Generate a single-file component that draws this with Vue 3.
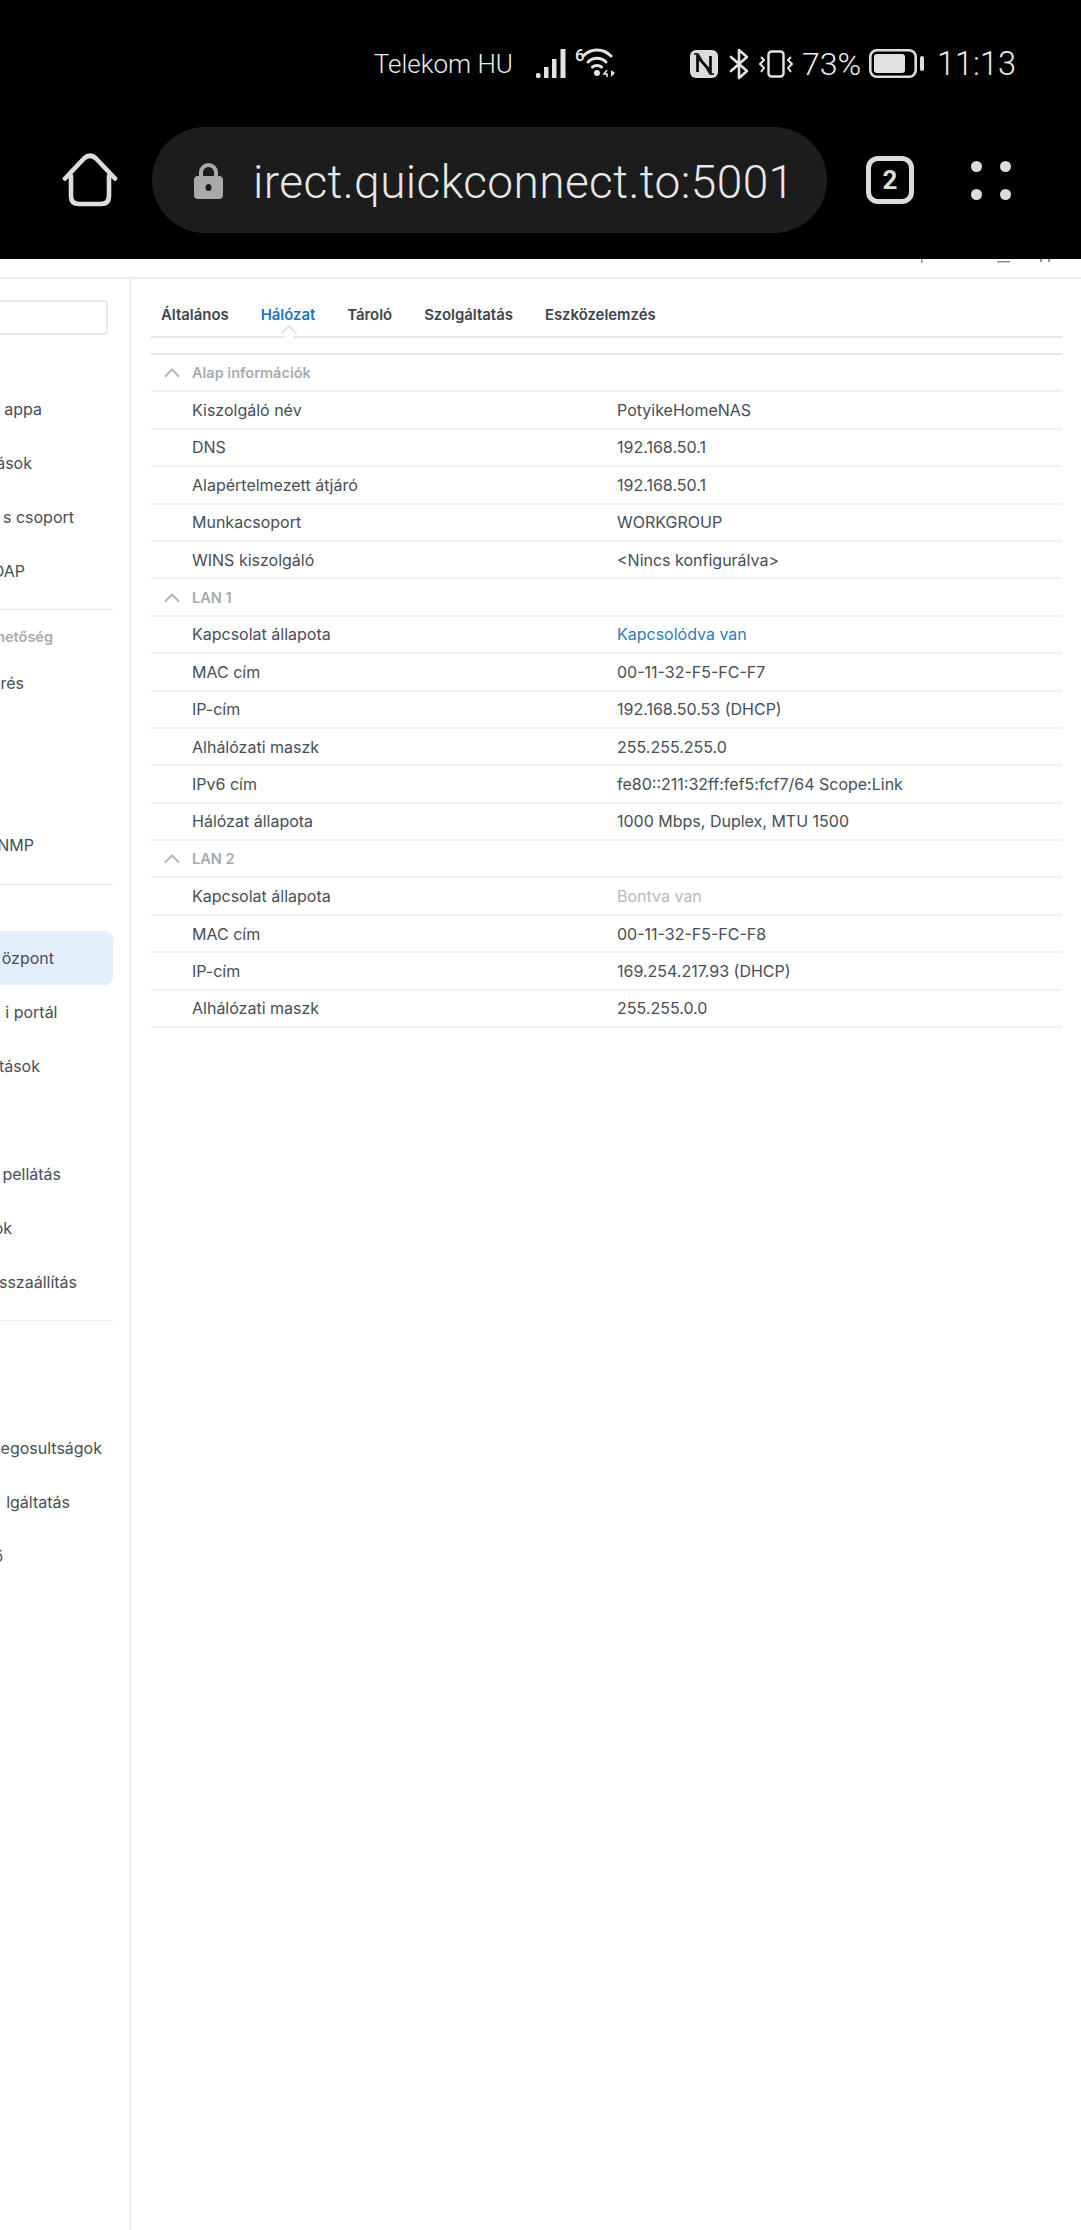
<script setup>
const sideTop = [
  { text: 'appa', end: 42 },
  { text: 'ások', end: 32 },
  { text: 's csoport', end: 74 },
  { text: 'DAP', end: 25 },
]
const sideConn = [
  { text: 'rés', end: 24 },
  { text: '', end: 0 },
  { text: '', end: 0 },
  { text: 'NMP', end: 34 },
]
const sideSys = [
  { text: 'özpont', end: 54, active: true },
  { text: 'i portál', end: 57.5 },
  { text: 'tások', end: 40 },
  { text: '', end: 0 },
  { text: 'pellátás', end: 61 },
  { text: 'ok', end: 12 },
  { text: 'sszaállítás', end: 77 },
]
const sideSvc = [
  { text: '', end: 0 },
  { text: 'egosultságok', end: 102 },
  { text: 'lgáltatás', end: 70 },
  { text: 'ő', end: 3 },
]
const tabs = ['Általános', 'Hálózat', 'Tároló', 'Szolgáltatás', 'Eszközelemzés']
const rows = [
  { head: 'Alap információk' },
  { label: 'Kiszolgáló név', value: 'PotyikeHomeNAS' },
  { label: 'DNS', value: '192.168.50.1' },
  { label: 'Alapértelmezett átjáró', value: '192.168.50.1' },
  { label: 'Munkacsoport', value: 'WORKGROUP' },
  { label: 'WINS kiszolgáló', value: '<Nincs konfigurálva>' },
  { head: 'LAN 1' },
  { label: 'Kapcsolat állapota', value: 'Kapcsolódva van', tone: 'ok' },
  { label: 'MAC cím', value: '00-11-32-F5-FC-F7' },
  { label: 'IP-cím', value: '192.168.50.53 (DHCP)' },
  { label: 'Alhálózati maszk', value: '255.255.255.0' },
  { label: 'IPv6 cím', value: 'fe80::211:32ff:fef5:fcf7/64 Scope:Link' },
  { label: 'Hálózat állapota', value: '1000 Mbps, Duplex, MTU 1500' },
  { head: 'LAN 2' },
  { label: 'Kapcsolat állapota', value: 'Bontva van', tone: 'off' },
  { label: 'MAC cím', value: '00-11-32-F5-FC-F8' },
  { label: 'IP-cím', value: '169.254.217.93 (DHCP)' },
  { label: 'Alhálózati maszk', value: '255.255.0.0' },
]
</script>

<template>
  <div class="screen">
    <header class="phone">
      <div class="status">
        <span class="carrier">Telekom HU</span>
        <svg class="signal" width="30" height="29" viewBox="0 0 30 29" fill="#e4e4e4">
          <rect x="0" y="24" width="4.5" height="5" rx="1.5" />
          <rect x="8" y="18" width="4.5" height="11" />
          <rect x="16" y="10" width="4.5" height="19" />
          <rect x="24.5" y="0" width="5" height="29" />
        </svg>
        <span class="six">6</span>
        <svg class="wifi" width="36" height="30" viewBox="0 0 36 30" fill="none" stroke="#e4e4e4" stroke-width="3" stroke-linecap="round">
          <path d="M2 9 C 10 1, 22 1, 30 9" />
          <path d="M7 15 C 12 10, 20 10, 25 15" />
          <path d="M11.5 20 C 14 18, 18 18, 20.5 20" />
          <circle cx="16" cy="26" r="3" fill="#e4e4e4" stroke="none" />
          <path d="M26 23 L23 27 H26 V30" stroke-width="1.6" stroke-linecap="butt" />
          <path d="M30 23 V30 L34 26 Z" stroke="none" fill="#e4e4e4" />
        </svg>
        <svg class="nfc" width="28" height="28" viewBox="0 0 28 28">
          <rect width="28" height="28" rx="6" fill="#dcdcdc" />
          <path d="M4 4 H8 L20 24 H24" fill="none" stroke="#000" stroke-width="1.4" />
          <path d="M7.5 22 V7 L20.5 21 V6" fill="none" stroke="#000" stroke-width="2.6" />
        </svg>
        <svg class="bt" width="20" height="32" viewBox="0 0 20 32" fill="none" stroke="#e4e4e4" stroke-width="2.6" stroke-linejoin="round" stroke-linecap="round">
          <path d="M2 9 L18 23 L10 30 V2 L18 9 L2 23" />
        </svg>
        <svg class="vib" width="36" height="28" viewBox="0 0 36 28" fill="none" stroke="#e4e4e4" stroke-width="2.4" stroke-linejoin="round">
          <rect x="10.5" y="1.5" width="15" height="25" rx="3" />
          <path d="M3 7 L6 10 L2 14 L6 18 L3 22" stroke-width="2" />
          <path d="M33 7 L30 10 L34 14 L30 18 L33 22" stroke-width="2" />
        </svg>
        <span class="pct">73%</span>
        <svg class="batt" width="55" height="29" viewBox="0 0 55 29" fill="none">
          <rect x="1.3" y="1.3" width="45.4" height="26.4" rx="6.5" stroke="#dcdcdc" stroke-width="2.6" />
          <rect x="5" y="5" width="31" height="19" rx="3" fill="#e2e2e2" />
          <rect x="51" y="7" width="4" height="15" rx="2" fill="#dcdcdc" />
        </svg>
        <span class="time">11:13</span>
      </div>
      <div class="toolbar">
        <svg class="home" width="58" height="56" viewBox="0 0 58 56" fill="none" stroke="#dedede" stroke-width="4.6" stroke-linecap="round" stroke-linejoin="round">
          <path d="M4 26.5 L23 6.5 Q29 1 35 6.5 L54 26.5" />
          <path d="M10 24 V44 Q10 52 18 52 H40 Q48 52 48 44 V24" />
        </svg>
        <div class="url">
          <svg class="lock" width="29" height="37" viewBox="0 0 29 37">
            <path d="M7 16 V10.5 A7.5 7.5 0 0 1 22 10.5 V16" fill="none" stroke="#a9a9a9" stroke-width="4" />
            <rect x="0" y="14" width="29" height="23" rx="4" fill="#a9a9a9" />
            <ellipse cx="14.5" cy="25.5" rx="3" ry="3.6" fill="#1c1c1c" />
          </svg>
          <span class="url-text">irect.quickconnect.to:5001</span>
        </div>
        <div class="tabcount">2</div>
        <div class="menu">
          <i></i><i></i><i></i><i></i>
        </div>
      </div>
    </header>

    <div class="topband">
      <svg class="remnants" width="140" height="5" viewBox="0 0 140 5" fill="#8b9097">
        <rect x="0" y="0" width="1.5" height="4" />
        <rect x="76" y="2" width="13" height="1.5" />
        <rect x="119" y="0" width="2" height="3" />
        <rect x="127" y="0" width="2" height="3" />
      </svg>
    </div>

    <div class="body">
      <aside class="sidebar">
        <div class="search"></div>
        <div class="side-group first">
          <div v-for="(it, i) in sideTop" :key="i" class="side-item">
            <span class="side-text" :style="{ width: it.end + 'px' }">{{ it.text }}</span>
          </div>
        </div>
        <div class="side-rule"></div>
        <div class="side-head">
          <span class="side-text head section-end">netőség</span>
        </div>
        <div v-for="(it, i) in sideConn" :key="'c' + i" class="side-item">
          <span class="side-text" :style="{ width: it.end + 'px' }">{{ it.text }}</span>
        </div>
        <div class="side-rule lower"></div>
        <div class="side-head"></div>
        <div v-for="(it, i) in sideSys" :key="'s' + i" class="side-item" :class="{ active: it.active }">
          <span class="side-text" :style="{ width: it.end + 'px' }">{{ it.text }}</span>
        </div>
        <div class="side-rule lower"></div>
        <div class="side-head"></div>
        <div v-for="(it, i) in sideSvc" :key="'v' + i" class="side-item">
          <span class="side-text" :style="{ width: it.end + 'px' }">{{ it.text }}</span>
        </div>
      </aside>

      <main class="content">
        <nav class="tabs">
          <span v-for="t in tabs" :key="t" class="tab" :class="{ current: t === 'Hálózat' }">{{ t }}</span>
        </nav>
        <div class="table">
          <div v-for="(r, i) in rows" :key="i" class="row" :class="{ head: r.head }">
            <template v-if="r.head">
              <svg class="chev" width="16" height="9" viewBox="0 0 16 9" fill="none" stroke="#b1b6bb" stroke-width="2" stroke-linecap="round" stroke-linejoin="round">
                <path d="M1.5 8 L8 1.5 L14.5 8" />
              </svg>
              <span class="head-text">{{ r.head }}</span>
            </template>
            <template v-else>
              <span class="label">{{ r.label }}</span>
              <span class="value" :class="r.tone">{{ r.value }}</span>
            </template>
          </div>
        </div>
      </main>
    </div>
  </div>
</template>

<style scoped>
.screen {
  width: 1081px;
  height: 2230px;
  overflow: hidden;
  background: #fff;
  font-family: Inter, "Noto Sans", sans-serif;
  display: flex;
  flex-direction: column;
}
.phone {
  height: 259px;
  background: #000;
  color: #ececec;
  flex: none;
}
.status {
  height: 127px;
  padding: 0 65px 0 0;
  box-sizing: border-box;
  display: flex;
  justify-content: flex-end;
  align-items: center;
  font-family: Roboto, sans-serif;
}
.carrier { font-size: 26px; font-weight: 300; margin-right: 23px; white-space: nowrap; }
.six { font-size: 17px; margin: -16px -2px 0 9px; font-weight: 500; width: 8px; line-height: 1; }
.wifi { margin: -3px 0 0 0; }
.nfc { margin-left: 73px; }
.bt { margin-left: 11px; }
.vib { margin-left: 9px; }
.pct { font-size: 32px; font-weight: 300; margin-left: 8px; white-space: nowrap; }
.batt { margin-left: 8px; }
.time { font-size: 32.5px; font-weight: 300; margin-left: 13px; white-space: nowrap; }

.toolbar {
  display: flex;
  align-items: center;
  height: 106px;
  padding-left: 61px;
}
.home { flex: none; }
.url {
  margin-left: 33px;
  width: 675px;
  height: 106px;
  border-radius: 53px;
  background: #1c1c1c;
  display: flex;
  align-items: center;
  padding-left: 42px;
  box-sizing: border-box;
  flex: none;
}
.lock { flex: none; }
.url-text {
  margin: 3px 0 0 30px;
  font-family: Roboto, sans-serif;
  font-size: 46px;
  letter-spacing: 0.4px;
  font-weight: 300;
  color: #e6e6e6;
  white-space: nowrap;
}
.tabcount {
  margin-left: 39px;
  width: 48px;
  height: 48px;
  box-sizing: border-box;
  border: 5px solid #dcdcdc;
  border-radius: 12px;
  color: #dcdcdc;
  display: flex;
  align-items: center;
  justify-content: center;
  font-family: Roboto, sans-serif;
  font-size: 26px;
  font-weight: 700;
  flex: none;
}
.menu {
  margin-left: 57px;
  display: grid;
  grid-template-columns: 11px 11px;
  grid-auto-rows: 11px;
  column-gap: 18px;
  row-gap: 17px;
  flex: none;
}
.menu i {
  display: block;
  border-radius: 50%;
  background: #dcdcdc;
}

.topband {
  height: 20px;
  border-bottom: 2px solid #eceef0;
  box-sizing: border-box;
  display: flex;
  justify-content: flex-end;
  padding-right: 20px;
  flex: none;
}
.remnants { display: block; }

.body {
  flex: 1;
  display: flex;
  min-height: 0;
}
.sidebar {
  width: 131px;
  box-sizing: border-box;
  border-right: 2px solid #eceef0;
  padding-top: 21px;
  flex: none;
  font-size: 16px;
  color: #474e56;
}
.search {
  width: 108px;
  height: 35px;
  box-sizing: border-box;
  border: 2px solid #e7e9ec;
  border-left: 0;
  border-radius: 0 4px 4px 0;
}
.side-group.first { margin-top: 47px; }
.side-item {
  height: 54px;
  width: 113px;
  display: flex;
  align-items: center;
}
.side-item.active {
  background: #e3f0fc;
  border-radius: 0 8px 8px 0;
}
.side-text {
  display: flex;
  justify-content: flex-end;
  white-space: nowrap;
}
.side-text.head {
  font-size: 14.5px;
  font-weight: 600;
  color: #a6abb1;
}
.section-end { width: 53px; }
.side-rule {
  width: 113px;
  height: 1px;
  background: #e9ebee;
  margin-top: 11px;
}
.side-rule.lower { margin-top: 11.5px; }
.side-head {
  height: 46px;
  display: flex;
  align-items: center;
  padding-top: 6px;
  box-sizing: border-box;
}

.content {
  flex: 1;
  min-width: 0;
  padding: 0 19px 0 20px;
}
.tabs {
  height: 59px;
  box-sizing: border-box;
  border-bottom: 2px solid #e4e6e9;
  padding-left: 10px;
  display: flex;
  gap: 32px;
  padding-top: 26px;
  font-size: 14.9px;
  font-weight: 600;
  color: #3c444d;
}
.tab { position: relative; line-height: 20px; height: 20px; white-space: nowrap; }
.tab.current { color: #1a74c4; }
.tab.current::after {
  content: "";
  position: absolute;
  left: 50%;
  bottom: -14px;
  width: 10px;
  height: 10px;
  margin-left: -5px;
  background: #fff;
  border-left: 2px solid #e4e6e9;
  border-top: 2px solid #e4e6e9;
  transform: rotate(45deg);
}
.table {
  margin-top: 15px;
  border-top: 2px solid #e4e6e9;
}
.row {
  height: 37.4px;
  box-sizing: border-box;
  border-bottom: 2px solid #f0f1f3;
  display: flex;
  align-items: center;
  padding-left: 41px;
  font-size: 16px;
  color: #474e56;
  white-space: nowrap;
}
.row.head { padding-left: 13px; }
.chev { flex: none; }
.head-text {
  margin-left: 12px;
  font-size: 14.5px;
  font-weight: 600;
  color: #a6abb1;
}
.label { width: 425px; flex: none; }
.value.ok { color: #2a7cc5; }
.value.off { color: #b6babe; }
</style>

<style>
html, body { margin: 0; padding: 0; background: #fff; }
</style>
